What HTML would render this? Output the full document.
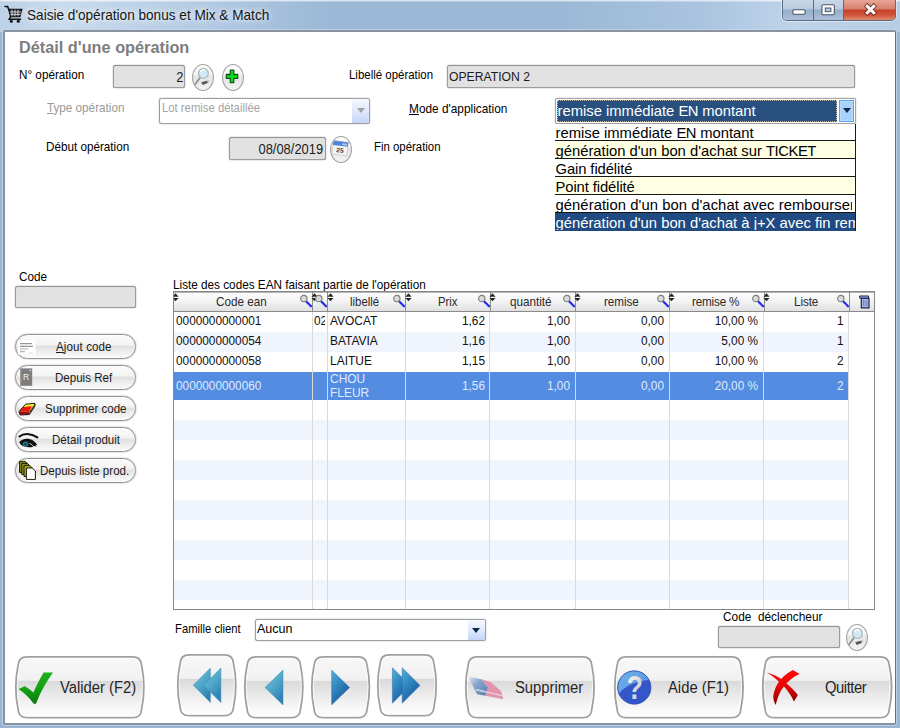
<!DOCTYPE html>
<html lang="fr">
<head>
<meta charset="utf-8">
<title>Saisie d'opération bonus et Mix &amp; Match</title>
<style>
*{box-sizing:border-box;margin:0;padding:0}
html,body{width:900px;height:728px;overflow:hidden}
body{position:relative;font-family:"Liberation Sans",sans-serif;background:#a9c3df;color:#000}
.abs,.lbl,.inp,.rbtn,.pill,.big,.cmb{position:absolute}
svg{display:block;overflow:visible}
#frame{position:absolute;left:0;top:0;width:900px;height:728px;
 background:linear-gradient(90deg,#bcd1e7 0,#c9dbed 60px,#b4cbe4 200px,#9bb8d6 330px,#9bb8d6 560px,#aac4df 700px,#bdd3ea 790px,#b6cde6 900px)}
#fl{position:absolute;left:0;top:32px;width:4px;height:696px;background:#9ab6d5}
#fr{position:absolute;left:895px;top:32px;width:5px;height:696px;background:#9ab6d5}
#fb{position:absolute;left:0;top:724px;width:900px;height:4px;background:#98b5d4}
#frametop{position:absolute;left:0;top:0;width:900px;height:2px;background:linear-gradient(180deg,rgba(255,255,255,.7) 0,rgba(255,255,255,.6) 45%,rgba(255,255,255,0) 100%)}
#title{position:absolute;left:27.4px;top:4px;height:22px;line-height:22px;font-size:14.5px;color:#161616;white-space:nowrap;transform:scaleX(.938);transform-origin:0 50%;
 text-shadow:0 0 6px rgba(255,255,255,.9),0 0 10px rgba(255,255,255,.7)}
#client{position:absolute;left:3px;top:30px;width:893px;height:695px;background:#fff;border:2px solid #8a94a1;border-right:1px solid #64717f;box-shadow:0 0 0 1px rgba(196,212,232,.85);border-radius:2px}
#ctl{position:absolute;left:782px;top:0;width:114px;height:21px;border:1px solid #5d6b7c;border-top:0;border-radius:0 0 5px 5px;overflow:hidden;
 box-shadow:0 0 0 1px rgba(255,255,255,.45)}
#ctl div{position:absolute;top:0;height:20px}
#cmin{left:0;width:31px;background:linear-gradient(180deg,#c9d8e8 0,#b9cbdf 45%,#97aec9 50%,#aac0d9 100%);border-right:1px solid #5d6b7c}
#cmax{left:31px;width:30px;background:linear-gradient(180deg,#c9d8e8 0,#b9cbdf 45%,#97aec9 50%,#aac0d9 100%);border-right:1px solid #5d6b7c}
#ccls{left:61px;width:51px;background:linear-gradient(180deg,#e7a596 0,#d8806f 45%,#c5432b 50%,#d1543a 75%,#e08a6c 100%)}
.lbl{font-size:13.4px;line-height:14px;white-space:nowrap;transform:scaleX(.8734);transform-origin:0 50%}
.sx{display:inline-block;transform:scaleX(.8734);transform-origin:0 50%}
.inp{background:#e1e1e1;border:1px solid #9c9c9c;border-top-color:#929292;border-radius:2.5px;font-size:13.5px;line-height:21px;white-space:nowrap;overflow:hidden;box-shadow:0 0 1.2px rgba(80,80,80,.75)}
u{text-decoration:underline;text-underline-offset:1px}
.rbtn{width:22px;height:27px;border-radius:50%;border:1.7px solid #a2a2a2;background:linear-gradient(180deg,#fdfdfd 0,#f6f6f6 40%,#e4e4e4 45%,#f3f3f3 100%);overflow:hidden}
.rbtn svg{position:absolute;left:-1.7px;top:-1.7px}
#dd{background:#fff;border-right:1px solid #1a1a1a;overflow:hidden}
#dd div{position:absolute;left:0;width:300px;height:18px;line-height:21px;font-size:14.8px;white-space:nowrap;overflow:hidden;border-bottom:1px solid #161616;padding-left:1px;color:#000;background:#fff}
#dd div i{display:block;font-style:normal;width:296px;overflow:hidden}
#dd div.y{background:#ffffe3}
#dd div.s{background:#1f4b82;color:#fff;border-bottom-color:#1f4b82}
.pill{left:15px;width:121px;height:25px;border:1px solid #939393;border-radius:12.5px;background:linear-gradient(180deg,#fbfbfb 0,#f3f3f3 44%,#dfdfdf 48%,#efefef 75%,#fbfbfb 100%);box-shadow:0 0 1.3px rgba(60,60,60,.7),inset 0 0 0 1px rgba(255,255,255,.6)}
.pill .t{position:absolute;top:0;line-height:23px;font-size:13.4px;white-space:nowrap;color:#1c1c1c;transform:scaleX(.862);transform-origin:0 50%}
.pill .ic{position:absolute}
#grid{background:#fff;border:1px solid #868686;overflow:hidden}
#rows .r{position:absolute;left:0;width:675px;height:20px;background:#fff}
#rows .r.b{background:#f0f4fc}
#rows .r.s{background:#548ce1}
#grid .v{position:absolute;top:20px;bottom:0;width:1px;background:#dadada}
#hdr{position:absolute;left:0;top:0;width:700px;height:19.6px;border-bottom:1.5px solid #8a8a8a;background:#fff}
#hdr .h{position:absolute;top:0;height:18.5px;background:linear-gradient(180deg,#fdfdfd 0,#f3f3f3 50%,#e0e0e0 100%);border-right:1px solid #8c8c8c;font-size:11.7px;line-height:19.3px;white-space:nowrap;color:#2a2a2a}
#hdr .h span{position:absolute;top:0;transform:scaleX(.8734);transform-origin:0 50%}
#hdr .h .so{position:absolute;left:-1.6px;top:.6px}
#hdr .h .hm{position:absolute;right:-.6px;top:.8px}
#hdr .h.last{border-right:0;background:linear-gradient(180deg,#fdfdfd 0,#f3f3f3 50%,#e0e0e0 100%)}
#grid .c{position:absolute;margin-top:-1.7px;font-size:13.4px;line-height:15px;white-space:nowrap;color:#111;transform:scaleX(.893);transform-origin:0 50%}
#grid .c.n{text-align:right;transform-origin:100% 50%}
#grid .c.w{color:#dfeaff}
.big{border:1.4px solid #9c9c9c;border-radius:9px/31px;background:linear-gradient(180deg,#f7f7f7 0,#f1f1f1 38%,#dbdbdb 40%,#e9e9e9 62%,#fafafa 88%,#fdfdfd 100%);box-shadow:inset 0 0 0 1px rgba(255,255,255,.85)}
.bigw{position:absolute}
.bigw svg{position:absolute;left:0;top:0}
.bigw .t{position:absolute;top:0;line-height:64.5px;font-size:15.8px;white-space:nowrap;color:#262626;transform:scaleX(.937);transform-origin:0 50%}
.k{letter-spacing:-.45px}
.nx{display:inline-block;font-size:15px;line-height:21px;color:#1c1c1c;transform:scaleX(.86)}
.nx.r{transform-origin:100% 50%}
.nx.l{transform-origin:0 50%}
#grid .c.d{transform:scaleX(.882)}
.cmb{background:#fff;border:1px solid #9e9e9e;border-radius:2.5px;font-size:11.4px;line-height:16px;padding:1px 0 0 3px;white-space:nowrap;overflow:hidden;box-shadow:0 0 1.2px rgba(90,90,90,.7)}
.cmb .arr{position:absolute;right:0;top:0;bottom:0;width:17px;background:linear-gradient(180deg,#f6f8ff 0,#e0e9fd 50%,#c4d4fa 100%)}
.cmb .arr:after{content:"";position:absolute;left:4.3px;top:7.8px;border-left:4.2px solid transparent;border-right:4.2px solid transparent;border-top:5px solid #10284c}
.cmb .arr.dis:after{border-top-color:#a2a2a2;left:5px;top:9.1px}
.cmb .arr.hot{right:.8px;top:1px;bottom:1px;width:15px;border:1px solid #5aa2f8;background:#a8d2fc;box-shadow:inset 0 0 0 1px #b9dcfd}
.cmb .arr.hot:after{left:2.6px;top:7.1px;border-top-color:#14284a}
.cmb.sel{padding:0;border-color:#a4a4a4;border-radius:2px}
.cmb.sel b{position:absolute;left:.5px;top:1px;right:18.3px;bottom:1px;background:#27507f;color:#fff;font-weight:normal;font-size:14.8px;line-height:21px;padding:1px 0 0 1px;outline:1px dotted #c9b8a0;outline-offset:-1px}
#grid:after{content:"";position:absolute;left:0;right:0;top:0;height:1px;background:rgba(110,110,110,.5)}

</style>
</head>
<body>
<svg width="0" height="0" style="position:absolute"><defs><linearGradient id="gbb" x1="0" y1="0" x2="0" y2="1"><stop offset="0" stop-color="#f8f8f8"/><stop offset=".385" stop-color="#f1f1f1"/><stop offset=".4" stop-color="#dadada"/><stop offset=".62" stop-color="#e9e9e9"/><stop offset=".88" stop-color="#fafafa"/><stop offset="1" stop-color="#fdfdfd"/></linearGradient></defs></svg>
<div id="frame"></div>
<div id="frametop"></div>
<div id="fl"></div><div id="fr"></div><div id="fb"></div>
<svg class="abs" style="left:4px;top:5px" width="20" height="19" viewBox="0 0 20 19"><g fill="none" stroke="#111" stroke-linecap="round"><path d="M1 1.6h2.6l1.3 3.2" stroke-width="1.5"/><path d="M4.6 4.4h13.2l-1.9 7.2H6.6z" fill="#2a2a2a" stroke-width="1.2"/><path d="M6.2 7h10.6M6.8 9.4h9.4M8 5v6M11 5v6M14 5v6" stroke="#d8dde4" stroke-width=".9"/><path d="M6.6 11.6l-1.4 2.6h11.4" stroke-width="1.5"/></g><circle cx="7.3" cy="16.3" r="1.5" fill="#111"/><circle cx="14.3" cy="16.3" r="1.5" fill="#111"/></svg>
<div id="title">Saisie d'opération bonus et Mix &amp; Match</div>
<div id="ctl"><div id="cmin"></div><div id="cmax"></div><div id="ccls"></div></div>
<svg class="abs" style="left:791.6px;top:9.2px" width="14" height="6" viewBox="0 0 14 6"><rect x=".9" y=".8" width="12.2" height="4.4" rx="1" fill="#fff" stroke="#4a5668" stroke-width="1.1"/></svg>
<svg class="abs" style="left:821.3px;top:3.8px" width="14" height="12" viewBox="0 0 14 12"><rect x=".9" y=".8" width="12.4" height="10" rx="1.2" fill="#fff" stroke="#4a5668" stroke-width="1.1"/><rect x="4.3" y="4" width="5.6" height="3.6" fill="#b9cbe0" stroke="#4a5668" stroke-width="1"/></svg>
<svg class="abs" style="left:862.6px;top:2.6px" width="15" height="13" viewBox="0 0 15 13"><g stroke-linecap="butt"><path d="M2.6 1.6l9.8 9.8M12.4 1.6l-9.8 9.8" stroke="#5a2016" stroke-width="5" opacity=".7"/><path d="M3.2 2.2l8.6 8.6M11.8 2.2l-8.6 8.6" stroke="#fff" stroke-width="3"/></g></svg>
<div id="client"></div>

<div class="abs" id="h1" style="left:19px;top:37.4px;font-size:16.3px;font-weight:bold;line-height:20px;color:#7d7d7d;white-space:nowrap">Détail d'une opération</div>

<div class="lbl" style="left:19px;top:68px;font-size:13.40px">N° opération</div>
<div class="inp" style="left:113px;top:65px;width:72px;height:23px;text-align:right;padding-right:1px"><span class="nx r">2</span></div>
<div class="rbtn" style="left:192px;top:63.5px"><svg width="22" height="27" viewBox="0 0 22 27"><path d="M9.2 14.6L4 21.4" stroke="#8a8a8a" stroke-width="1.6" stroke-linecap="round" fill="none"/><path d="M10.2 19.2l5.6-1.4 1.4 2-5.4 2.2z" fill="#555"/><path d="M15.2 17.6l2.6-.4.6 1.6-1.6.8z" fill="#b9b9b9"/><circle cx="12.4" cy="10.4" r="4.9" fill="#cfe9f5" stroke="#b3b7ba" stroke-width="1.3"/><path d="M9.6 8.6a3.4 3.4 0 0 1 4.6-1.2" stroke="#fff" stroke-width="1.3" fill="none" stroke-linecap="round"/></svg></div>
<div class="rbtn" style="left:222px;top:63.5px"><svg width="22" height="27" viewBox="0 0 22 27"><path transform="translate(1.1 .6) scale(.92 1)" d="M8.9 6.6h3.8v4.3h4.3v3.8h-4.3V19H8.9v-4.3H4.6v-3.8h4.3z" fill="#06e21c" stroke="#0a5410" stroke-width="1.3" stroke-linejoin="round"/></svg></div>
<div class="lbl" style="left:348.8px;top:68px;font-size:13.11px">Libellé opération</div>
<div class="inp" style="left:447px;top:65px;width:408px;height:23px;padding-left:1px"><span class="nx l" style="font-size:13.4px;transform:scaleX(.91)">OPERATION 2</span></div>

<div class="lbl" style="left:46.5px;top:101px;color:#9a9a9a;font-size:13.40px"><u>T</u>ype opération</div>
<div class="cmb" style="left:159px;top:98px;width:211px;height:26px;padding:0 0 0 1.5px"><span class="sx" style="color:#a5a5a5;font-size:12.94px;position:relative;top:1px">Lot remise détaillée</span><i class="arr dis"></i></div>
<div class="lbl" style="left:409px;top:101.6px;font-size:13.57px"><u>M</u>ode d'application</div>
<div class="cmb sel" style="left:555px;top:98px;width:301px;height:26px"><b>remise immédiate <span class="k">EN</span> montant</b><i class="arr hot"></i></div>
<div class="abs" id="dd" style="left:554.5px;top:124px;width:301.5px;height:106.5px">
<div style="top:-1px"><i>remise immédiate <span class="k">EN</span> montant</i></div>
<div class="y" style="top:17px"><i>génération d'un bon d'achat sur <span class="k">TICKET</span></i></div>
<div style="top:35px"><i style="letter-spacing:-.1px">Gain fidélité</i></div>
<div class="y" style="top:53px"><i style="letter-spacing:-.1px">Point fidélité</i></div>
<div style="top:71px"><i style="letter-spacing:.06px">génération d'un bon d'achat avec remboursement</i></div>
<div class="s" style="top:89px"><i style="width:300px">génération d'un bon d'achat à j+X avec fin remise</i></div>
</div>

<div class="lbl" style="left:46px;top:140px;font-size:13.40px">Début opération</div>
<div class="inp" style="left:229px;top:137px;width:97px;height:23px;text-align:right;padding-right:1.5px"><span class="nx r">08/08/2019</span></div>
<div class="rbtn" style="left:330px;top:135.5px"><svg width="22" height="27" viewBox="0 0 22 27"><g transform="rotate(7 11 13)"><rect x="3.6" y="6.4" width="15" height="13.6" fill="#f4f4f4" stroke="#c9c9c9" stroke-width=".8"/><rect x="3.6" y="6.4" width="15" height="4.4" fill="#4f84dc"/><rect x="12.6" y="8" width="5" height="1.8" fill="#a9c5f2"/><text x="11.2" y="17.4" font-family="Liberation Sans, sans-serif" font-size="6.6" font-weight="bold" text-anchor="middle" fill="#3a3a3a">25</text></g></svg></div>
<div class="lbl" style="left:374px;top:140px;font-size:13.05px">Fin opération</div>

<div class="lbl" style="left:19.3px;top:270px;font-size:13.40px">Code</div>
<div class="inp" style="left:14.6px;top:286px;width:121.8px;height:22px"></div>
<div class="lbl" style="left:173px;top:277.7px;font-size:13.45px">Liste des codes EAN faisant partie de l'opération</div>

<div class="pill" style="top:334px"><span class="ic" style="left:1px;top:3px"><svg class="ic" width="20" height="18" viewBox="0 0 20 18"><rect x="1" y="2" width="17.5" height="14.6" fill="#fff"/><path d="M1.2 1.6c1-1 2.2-.6 2.6.4" stroke="#c9c9c9" fill="none"/><path d="M3 5.6h12M3 8.3h13" stroke="#969696" stroke-width="1.3"/><path d="M3 11h8M3 13.6h5" stroke="#b0b0b0" stroke-width="1.2"/><path d="M11.5 15h5" stroke="#dadada" stroke-width="1"/></svg></span><span class="t" style="left:39.6px;letter-spacing:.12px"><u>A</u>jout code</span></div>
<div class="pill" style="top:365px"><span class="ic" style="left:-1px;top:1px"><svg class="ic" width="20" height="20" viewBox="0 0 20 20"><rect x="5" y="1.4" width="12.2" height="17.4" fill="#7c7c7c"/><rect x="5" y="1.4" width="1.4" height="17.4" fill="#9a9a9a"/><circle cx="15.3" cy="3.4" r=".9" fill="#c8c8c8"/><text x="11.1" y="13.4" font-family="Liberation Sans, sans-serif" font-size="8.6" text-anchor="middle" fill="#f3f3f3">R</text></svg></span><span class="t" style="left:39.1px">Depuis Ref</span></div>
<div class="pill" style="top:396px"><span class="ic" style="left:1.3px;top:4px"><svg class="ic" width="20" height="16" viewBox="0 0 20 16"><path d="M2 10.6L8.6 3.2l9.4-.9-5.6 8.1z" fill="#f4f21e"/><path d="M2 10.6l4.2-4.7 8.6-.6-2.4 5.1z" fill="#ee1414"/><path d="M2 10.6l10.4-.2v3.1L3.2 14z" fill="#9c0c0c"/><path d="M12.4 10.4L18 2.3v2.6l-5.6 8.6z" fill="#5a5a10"/><path d="M2 10.6L8.6 3.2l9.4-.9v2.6l-5.6 8.6L3.2 14z" fill="none" stroke="#1a1a1a" stroke-width="1" stroke-linejoin="round"/></svg></span><span class="t" style="left:28.6px">Supprimer code</span></div>
<div class="pill" style="top:427px"><span class="ic" style="left:2px;top:4px"><svg class="ic" width="22" height="18" viewBox="0 0 22 18"><path d="M1.4 4.6C5.6 1 12.6.8 19.4 5.4" fill="none" stroke="#111" stroke-width="2" stroke-linecap="round"/><path d="M1.2 10.2C4 6.4 10 5.6 14.6 8.2c2 1.1 3.4 2.6 4.2 4.2-3 3.2-8.4 3.6-12.4 2.2C4 13.8 2.2 12.2 1.2 10.2z" fill="#0e0e0e"/><circle cx="7.6" cy="12.1" r="2.7" fill="#1c8a92"/><circle cx="7.6" cy="12.1" r="1.2" fill="#05282b"/><path d="M12 9.4c2 .8 4.4 2.6 6 5.2M13.6 8.6c2.2 1 4 2.6 5.2 4.6" stroke="#222" stroke-width=".9" fill="none"/><path d="M11.5 11.5c1.5.5 3 1.7 4.2 3.4" stroke="#f0f0f0" stroke-width="1" fill="none"/></svg></span><span class="t" style="left:35.6px">Détail produit</span></div>
<div class="pill" style="top:458px"><span class="ic" style="left:2px;top:1px"><svg class="ic" width="20" height="21" viewBox="0 0 20 21"><g stroke="#1c1c08" stroke-width="1" stroke-linejoin="round"><path d="M1.6 1.4h5.6l2.4 2.4v8.6H1.6z" fill="#8c8a14"/><path d="M3.8 3.4h5.6l2.4 2.4v8.6H3.8z" fill="#9a981c"/><path d="M6 5.4h5.6l2.4 2.4v8.6H6z" fill="#a8a624"/><path d="M8.4 8h5.8l3.2 3v8.4H8.4z" fill="#fff"/></g></svg></span><span class="t" style="left:23.6px">Depuis liste prod.</span></div>

<div class="abs" id="grid" style="left:173px;top:291px;width:702px;height:319px">
 <div id="rows">
  <div class="r" style="top:20px"></div>
  <div class="r b" style="top:39.5px"></div>
  <div class="r" style="top:60px"></div>
  <div class="r s" style="top:79.5px;height:28.5px"></div>
  <div class="r b" style="top:128px"></div>
  <div class="r b" style="top:168px"></div>
  <div class="r b" style="top:208px"></div>
  <div class="r b" style="top:248px"></div>
  <div class="r b" style="top:288px"></div>
 </div>
 <div class="v" style="left:137.5px"></div><div class="v" style="left:152.8px"></div><div class="v" style="left:230.6px"></div>
 <div class="v" style="left:315.1px"></div><div class="v" style="left:400.5px"></div><div class="v" style="left:494.5px"></div>
 <div class="v" style="left:589px"></div><div class="v" style="left:674px"></div>
 <div id="hdr">
  <div class="h" style="left:0;width:139px"><svg class="so" width="7" height="9" viewBox="0 0 7 9"><path d="M.4 3.7L3.5 .3l3.1 3.4zM.4 4.9h6.2L3.5 8.3z" fill="#262626"/></svg><span style="left:42px;font-size:13.40px">Code ean</span><svg class="hm" width="14" height="16" viewBox="0 0 14 16"><path d="M7 8.2l5 5" stroke="#1a1af0" stroke-width="2.2" stroke-linecap="round"/><path d="M7.8 9.6l3.8 3.8" stroke="#9a9aff" stroke-width=".7" stroke-dasharray="1 1"/><circle cx="4.8" cy="5.6" r="3.2" fill="#d9d9d9" stroke="#7d7d7d" stroke-width="1.1"/></svg></div>
  <div class="h" style="left:139px;width:15.3px"><svg class="so" width="7" height="9" viewBox="0 0 7 9"><path d="M.4 3.7L3.5 .3l3.1 3.4zM.4 4.9h6.2L3.5 8.3z" fill="#262626"/></svg><svg class="hm" width="14" height="16" viewBox="0 0 14 16"><path d="M7 8.2l5 5" stroke="#1a1af0" stroke-width="2.2" stroke-linecap="round"/><path d="M7.8 9.6l3.8 3.8" stroke="#9a9aff" stroke-width=".7" stroke-dasharray="1 1"/><circle cx="4.8" cy="5.6" r="3.2" fill="#d9d9d9" stroke="#7d7d7d" stroke-width="1.1"/></svg></div>
  <div class="h" style="left:154.3px;width:77.8px"><svg class="so" width="7" height="9" viewBox="0 0 7 9"><path d="M.4 3.7L3.5 .3l3.1 3.4zM.4 4.9h6.2L3.5 8.3z" fill="#262626"/></svg><span style="left:21.5px;font-size:13.05px">libellé</span><svg class="hm" width="14" height="16" viewBox="0 0 14 16"><path d="M7 8.2l5 5" stroke="#1a1af0" stroke-width="2.2" stroke-linecap="round"/><path d="M7.8 9.6l3.8 3.8" stroke="#9a9aff" stroke-width=".7" stroke-dasharray="1 1"/><circle cx="4.8" cy="5.6" r="3.2" fill="#d9d9d9" stroke="#7d7d7d" stroke-width="1.1"/></svg></div>
  <div class="h" style="left:232.1px;width:84.9px"><svg class="so" width="7" height="9" viewBox="0 0 7 9"><path d="M.4 3.7L3.5 .3l3.1 3.4zM.4 4.9h6.2L3.5 8.3z" fill="#262626"/></svg><span style="left:31.5px;font-size:12.94px">Prix</span><svg class="hm" width="14" height="16" viewBox="0 0 14 16"><path d="M7 8.2l5 5" stroke="#1a1af0" stroke-width="2.2" stroke-linecap="round"/><path d="M7.8 9.6l3.8 3.8" stroke="#9a9aff" stroke-width=".7" stroke-dasharray="1 1"/><circle cx="4.8" cy="5.6" r="3.2" fill="#d9d9d9" stroke="#7d7d7d" stroke-width="1.1"/></svg></div>
  <div class="h" style="left:317px;width:85px"><svg class="so" width="7" height="9" viewBox="0 0 7 9"><path d="M.4 3.7L3.5 .3l3.1 3.4zM.4 4.9h6.2L3.5 8.3z" fill="#262626"/></svg><span style="left:19px;font-size:13.40px">quantité</span><svg class="hm" width="14" height="16" viewBox="0 0 14 16"><path d="M7 8.2l5 5" stroke="#1a1af0" stroke-width="2.2" stroke-linecap="round"/><path d="M7.8 9.6l3.8 3.8" stroke="#9a9aff" stroke-width=".7" stroke-dasharray="1 1"/><circle cx="4.8" cy="5.6" r="3.2" fill="#d9d9d9" stroke="#7d7d7d" stroke-width="1.1"/></svg></div>
  <div class="h" style="left:402px;width:94px"><svg class="so" width="7" height="9" viewBox="0 0 7 9"><path d="M.4 3.7L3.5 .3l3.1 3.4zM.4 4.9h6.2L3.5 8.3z" fill="#262626"/></svg><span style="left:27.5px;letter-spacing:-.1px;font-size:13.40px">remise</span><svg class="hm" width="14" height="16" viewBox="0 0 14 16"><path d="M7 8.2l5 5" stroke="#1a1af0" stroke-width="2.2" stroke-linecap="round"/><path d="M7.8 9.6l3.8 3.8" stroke="#9a9aff" stroke-width=".7" stroke-dasharray="1 1"/><circle cx="4.8" cy="5.6" r="3.2" fill="#d9d9d9" stroke="#7d7d7d" stroke-width="1.1"/></svg></div>
  <div class="h" style="left:496px;width:95px"><svg class="so" width="7" height="9" viewBox="0 0 7 9"><path d="M.4 3.7L3.5 .3l3.1 3.4zM.4 4.9h6.2L3.5 8.3z" fill="#262626"/></svg><span style="left:22px;letter-spacing:-.2px;font-size:13.40px">remise %</span><svg class="hm" width="14" height="16" viewBox="0 0 14 16"><path d="M7 8.2l5 5" stroke="#1a1af0" stroke-width="2.2" stroke-linecap="round"/><path d="M7.8 9.6l3.8 3.8" stroke="#9a9aff" stroke-width=".7" stroke-dasharray="1 1"/><circle cx="4.8" cy="5.6" r="3.2" fill="#d9d9d9" stroke="#7d7d7d" stroke-width="1.1"/></svg></div>
  <div class="h" style="left:591px;width:85px"><svg class="so" width="7" height="9" viewBox="0 0 7 9"><path d="M.4 3.7L3.5 .3l3.1 3.4zM.4 4.9h6.2L3.5 8.3z" fill="#262626"/></svg><span style="left:28.5px;letter-spacing:-.1px;font-size:13.40px">Liste</span><svg class="hm" width="14" height="16" viewBox="0 0 14 16"><path d="M7 8.2l5 5" stroke="#1a1af0" stroke-width="2.2" stroke-linecap="round"/><path d="M7.8 9.6l3.8 3.8" stroke="#9a9aff" stroke-width=".7" stroke-dasharray="1 1"/><circle cx="4.8" cy="5.6" r="3.2" fill="#d9d9d9" stroke="#7d7d7d" stroke-width="1.1"/></svg></div>
  <div class="h last" style="left:676px;width:25px"></div>
  <svg class="abs" style="left:684px;top:1.6px" width="13" height="16" viewBox="0 0 14 17"><path d="M3.6 4.6h8.2v10.2H3.6z" fill="#b0bdee" stroke="#1c2440" stroke-width="1.3"/><path d="M1.8 2h9.6v2.4H1.8z" fill="#8c9fe2" stroke="#1c2440" stroke-width="1"/><path d="M5.9 6.4v6.6M7.7 6.4v6.6M9.5 6.4v6.6" stroke="#5a6cc0" stroke-width=".8"/></svg>
 </div>
 <div class="c d" style="left:1.5px;top:23px">0000000000001</div>
 <div class="c d" style="left:1.5px;top:43px">0000000000054</div>
 <div class="c d" style="left:1.5px;top:63px">0000000000058</div>
 <div class="c d w" style="left:1.5px;top:88px">0000000000060</div>
 <div class="c d" style="left:140px;top:23px;width:15px;clip-path:inset(0 2.5px 0 0)">02</div>
 <div class="c" style="left:155.8px;top:23px">AVOCAT</div>
 <div class="c" style="left:155.8px;top:43px">BATAVIA</div>
 <div class="c" style="left:155.8px;top:63px">LAITUE</div>
 <div class="c w" style="left:155.8px;top:80px;margin-top:0;line-height:14px">CHOU<br>FLEUR</div>
 <div class="c d n" style="left:233px;width:78px;top:23px">1,62</div>
 <div class="c d n" style="left:233px;width:78px;top:43px">1,16</div>
 <div class="c d n" style="left:233px;width:78px;top:63px">1,15</div>
 <div class="c d n w" style="left:233px;width:78px;top:88px">1,56</div>
 <div class="c d n" style="left:317px;width:79px;top:23px">1,00</div>
 <div class="c d n" style="left:317px;width:79px;top:43px">1,00</div>
 <div class="c d n" style="left:317px;width:79px;top:63px">1,00</div>
 <div class="c d n w" style="left:317px;width:79px;top:88px">1,00</div>
 <div class="c d n" style="left:402px;width:88px;top:23px">0,00</div>
 <div class="c d n" style="left:402px;width:88px;top:43px">0,00</div>
 <div class="c d n" style="left:402px;width:88px;top:63px">0,00</div>
 <div class="c d n w" style="left:402px;width:88px;top:88px">0,00</div>
 <div class="c d n" style="left:496px;width:88px;top:23px">10,00 %</div>
 <div class="c d n" style="left:496px;width:88px;top:43px">5,00 %</div>
 <div class="c d n" style="left:496px;width:88px;top:63px">10,00 %</div>
 <div class="c d n w" style="left:496px;width:88px;top:88px">20,00 %</div>
 <div class="c d n" style="left:591px;width:78.5px;top:23px">1</div>
 <div class="c d n" style="left:591px;width:78.5px;top:43px">1</div>
 <div class="c d n" style="left:591px;width:78.5px;top:63px">2</div>
 <div class="c d n w" style="left:591px;width:78.5px;top:88px">2</div>
</div>

<div class="lbl" style="left:175px;top:622px;font-size:12.9px">Famille client</div>
<div class="cmb" style="left:255px;top:619px;width:231px;height:22px"><span class="sx" style="font-size:13.6px;position:relative;top:0;left:-2.2px;transform:scaleX(.92)">Aucun</span><i class="arr"></i></div>
<div class="lbl" style="left:722.5px;top:609.5px;font-size:13.57px">Code&nbsp; déclencheur</div>
<div class="inp" style="left:717.6px;top:626px;width:122px;height:22px"></div>
<div class="rbtn" style="left:846px;top:623.5px"><svg width="22" height="27" viewBox="0 0 22 27"><path d="M9.2 14.6L4 21.4" stroke="#8a8a8a" stroke-width="1.6" stroke-linecap="round" fill="none"/><path d="M10.2 19.2l5.6-1.4 1.4 2-5.4 2.2z" fill="#555"/><path d="M15.2 17.6l2.6-.4.6 1.6-1.6.8z" fill="#b9b9b9"/><circle cx="12.4" cy="10.4" r="4.9" fill="#cfe9f5" stroke="#b3b7ba" stroke-width="1.3"/><path d="M9.6 8.6a3.4 3.4 0 0 1 4.6-1.2" stroke="#fff" stroke-width="1.3" fill="none" stroke-linecap="round"/></svg></div>

<div class="bigw" style="left:14.8px;top:656px;width:129.7px;height:62.6px"><svg width="129.7" height="62.6" viewBox="0 0 129.7 62.6"><path d="M12.10 0.90H117.60Q126.10 0.90 126.60 9.40Q131.23 31.30 126.60 53.20Q126.10 61.70 117.60 61.70H12.10Q3.60 61.70 3.10 53.20Q-1.53 31.30 3.10 9.40Q3.60 0.90 12.10 0.90Z" fill="url(#gbb)" stroke="#a0a0a0" stroke-width="1.8"/><path d="M12.10 0.90H117.60Q126.10 0.90 126.60 9.40Q131.23 31.30 126.60 53.20Q126.10 61.70 117.60 61.70H12.10Q3.60 61.70 3.10 53.20Q-1.53 31.30 3.10 9.40Q3.60 0.90 12.10 0.90Z" fill="none" stroke="#fff" stroke-opacity=".7" stroke-width="1" transform="translate(64.85 31.30) scale(0.9753 0.9489) translate(-64.85 -31.30)"/></svg><span class="t" style="left:45.5px">Valider (F2)</span></div>
<div class="bigw" style="left:177.4px;top:654px;width:59.6px;height:62.6px"><svg width="59.6" height="62.6" viewBox="0 0 59.6 62.6"><path d="M12.10 0.90H47.50Q56.00 0.90 56.50 9.40Q61.13 31.30 56.50 53.20Q56.00 61.70 47.50 61.70H12.10Q3.60 61.70 3.10 53.20Q-1.53 31.30 3.10 9.40Q3.60 0.90 12.10 0.90Z" fill="url(#gbb)" stroke="#a0a0a0" stroke-width="1.8"/><path d="M12.10 0.90H47.50Q56.00 0.90 56.50 9.40Q61.13 31.30 56.50 53.20Q56.00 61.70 47.50 61.70H12.10Q3.60 61.70 3.10 53.20Q-1.53 31.30 3.10 9.40Q3.60 0.90 12.10 0.90Z" fill="none" stroke="#fff" stroke-opacity=".7" stroke-width="1" transform="translate(29.80 31.30) scale(0.9463 0.9489) translate(-29.80 -31.30)"/></svg></div>
<div class="bigw" style="left:243.9px;top:656px;width:59.6px;height:62.6px"><svg width="59.6" height="62.6" viewBox="0 0 59.6 62.6"><path d="M12.10 0.90H47.50Q56.00 0.90 56.50 9.40Q61.13 31.30 56.50 53.20Q56.00 61.70 47.50 61.70H12.10Q3.60 61.70 3.10 53.20Q-1.53 31.30 3.10 9.40Q3.60 0.90 12.10 0.90Z" fill="url(#gbb)" stroke="#a0a0a0" stroke-width="1.8"/><path d="M12.10 0.90H47.50Q56.00 0.90 56.50 9.40Q61.13 31.30 56.50 53.20Q56.00 61.70 47.50 61.70H12.10Q3.60 61.70 3.10 53.20Q-1.53 31.30 3.10 9.40Q3.60 0.90 12.10 0.90Z" fill="none" stroke="#fff" stroke-opacity=".7" stroke-width="1" transform="translate(29.80 31.30) scale(0.9463 0.9489) translate(-29.80 -31.30)"/></svg></div>
<div class="bigw" style="left:310.5px;top:656px;width:59.2px;height:62.6px"><svg width="59.2" height="62.6" viewBox="0 0 59.2 62.6"><path d="M12.10 0.90H47.10Q55.60 0.90 56.10 9.40Q60.73 31.30 56.10 53.20Q55.60 61.70 47.10 61.70H12.10Q3.60 61.70 3.10 53.20Q-1.53 31.30 3.10 9.40Q3.60 0.90 12.10 0.90Z" fill="url(#gbb)" stroke="#a0a0a0" stroke-width="1.8"/><path d="M12.10 0.90H47.10Q55.60 0.90 56.10 9.40Q60.73 31.30 56.10 53.20Q55.60 61.70 47.10 61.70H12.10Q3.60 61.70 3.10 53.20Q-1.53 31.30 3.10 9.40Q3.60 0.90 12.10 0.90Z" fill="none" stroke="#fff" stroke-opacity=".7" stroke-width="1" transform="translate(29.60 31.30) scale(0.9459 0.9489) translate(-29.60 -31.30)"/></svg></div>
<div class="bigw" style="left:377px;top:654px;width:60px;height:62.6px"><svg width="60" height="62.6" viewBox="0 0 60 62.6"><path d="M12.10 0.90H47.90Q56.40 0.90 56.90 9.40Q61.53 31.30 56.90 53.20Q56.40 61.70 47.90 61.70H12.10Q3.60 61.70 3.10 53.20Q-1.53 31.30 3.10 9.40Q3.60 0.90 12.10 0.90Z" fill="url(#gbb)" stroke="#a0a0a0" stroke-width="1.8"/><path d="M12.10 0.90H47.90Q56.40 0.90 56.90 9.40Q61.53 31.30 56.90 53.20Q56.40 61.70 47.90 61.70H12.10Q3.60 61.70 3.10 53.20Q-1.53 31.30 3.10 9.40Q3.60 0.90 12.10 0.90Z" fill="none" stroke="#fff" stroke-opacity=".7" stroke-width="1" transform="translate(30.00 31.30) scale(0.9467 0.9489) translate(-30.00 -31.30)"/></svg></div>
<div class="bigw" style="left:465.2px;top:656px;width:129.9px;height:62.6px"><svg width="129.9" height="62.6" viewBox="0 0 129.9 62.6"><path d="M12.10 0.90H117.80Q126.30 0.90 126.80 9.40Q131.43 31.30 126.80 53.20Q126.30 61.70 117.80 61.70H12.10Q3.60 61.70 3.10 53.20Q-1.53 31.30 3.10 9.40Q3.60 0.90 12.10 0.90Z" fill="url(#gbb)" stroke="#a0a0a0" stroke-width="1.8"/><path d="M12.10 0.90H117.80Q126.30 0.90 126.80 9.40Q131.43 31.30 126.80 53.20Q126.30 61.70 117.80 61.70H12.10Q3.60 61.70 3.10 53.20Q-1.53 31.30 3.10 9.40Q3.60 0.90 12.10 0.90Z" fill="none" stroke="#fff" stroke-opacity=".7" stroke-width="1" transform="translate(64.95 31.30) scale(0.9754 0.9489) translate(-64.95 -31.30)"/></svg><span class="t" style="left:49.7px">Supprimer</span></div>
<div class="bigw" style="left:613.8px;top:656px;width:129.9px;height:62.6px"><svg width="129.9" height="62.6" viewBox="0 0 129.9 62.6"><path d="M12.10 0.90H117.80Q126.30 0.90 126.80 9.40Q131.43 31.30 126.80 53.20Q126.30 61.70 117.80 61.70H12.10Q3.60 61.70 3.10 53.20Q-1.53 31.30 3.10 9.40Q3.60 0.90 12.10 0.90Z" fill="url(#gbb)" stroke="#a0a0a0" stroke-width="1.8"/><path d="M12.10 0.90H117.80Q126.30 0.90 126.80 9.40Q131.43 31.30 126.80 53.20Q126.30 61.70 117.80 61.70H12.10Q3.60 61.70 3.10 53.20Q-1.53 31.30 3.10 9.40Q3.60 0.90 12.10 0.90Z" fill="none" stroke="#fff" stroke-opacity=".7" stroke-width="1" transform="translate(64.95 31.30) scale(0.9754 0.9489) translate(-64.95 -31.30)"/></svg><span class="t" style="left:53.8px">Aide (F1)</span></div>
<div class="bigw" style="left:762.3px;top:656px;width:130.4px;height:62.6px"><svg width="130.4" height="62.6" viewBox="0 0 130.4 62.6"><path d="M12.10 0.90H118.30Q126.80 0.90 127.30 9.40Q131.93 31.30 127.30 53.20Q126.80 61.70 118.30 61.70H12.10Q3.60 61.70 3.10 53.20Q-1.53 31.30 3.10 9.40Q3.60 0.90 12.10 0.90Z" fill="url(#gbb)" stroke="#a0a0a0" stroke-width="1.8"/><path d="M12.10 0.90H118.30Q126.80 0.90 127.30 9.40Q131.93 31.30 127.30 53.20Q126.80 61.70 118.30 61.70H12.10Q3.60 61.70 3.10 53.20Q-1.53 31.30 3.10 9.40Q3.60 0.90 12.10 0.90Z" fill="none" stroke="#fff" stroke-opacity=".7" stroke-width="1" transform="translate(65.20 31.30) scale(0.9755 0.9489) translate(-65.20 -31.30)"/></svg><span class="t" style="left:63px;letter-spacing:-.48px">Quitter</span></div>
<svg class="abs" style="left:0;top:650px" width="900" height="78" viewBox="0 650 900 78">
<defs>
<linearGradient id="gck" x1="0" y1="0" x2="0" y2="1"><stop offset="0" stop-color="#1eb01e"/><stop offset=".55" stop-color="#12a012"/><stop offset="1" stop-color="#0a7a0a"/></linearGradient>
<linearGradient id="gaL" x1="0" y1="0" x2=".6" y2="1"><stop offset="0" stop-color="#64bad6"/><stop offset=".5" stop-color="#54accc"/><stop offset="1" stop-color="#2f80b4"/></linearGradient>
<linearGradient id="gaR" x1="0" y1="0" x2=".6" y2="1"><stop offset="0" stop-color="#52b0d6"/><stop offset=".5" stop-color="#2e84be"/><stop offset="1" stop-color="#1c569c"/></linearGradient>
<linearGradient id="geb" x1="0" y1="0" x2="1" y2="1"><stop offset="0" stop-color="#e3ecf6"/><stop offset=".4" stop-color="#86a6cc"/><stop offset="1" stop-color="#4f7fb2"/></linearGradient>
<linearGradient id="grx" x1="0" y1="0" x2="0" y2="1"><stop offset="0" stop-color="#ff0a0a"/><stop offset=".45" stop-color="#ea0404"/><stop offset="1" stop-color="#8c0000"/></linearGradient>
<linearGradient id="ghl" x1="0" y1="0" x2="1" y2="1"><stop offset="0" stop-color="#7ab8ee"/><stop offset="1" stop-color="#4e8cdc"/></linearGradient><linearGradient id="gqm" x1="0" y1="0" x2="1" y2="1"><stop offset="0" stop-color="#fff"/><stop offset=".6" stop-color="#d4d6da"/><stop offset="1" stop-color="#f2f2f2"/></linearGradient><clipPath id="chp"><circle cx="634.3" cy="687.5" r="16.6"/></clipPath>
</defs>
<path d="M18.6 688.9l6.2-2.6c3.4 1.8 6 3.8 8.6 6.2 2.8-6.6 6.4-13.4 10.2-20h9.4c-6.8 9.4-12.6 19.8-17 31.2h-2.4c-4-6-9-10.8-15-14.8z" fill="url(#gck)"/>
<g stroke="#3a8cb4" stroke-width=".5" stroke-linejoin="round">
<path d="M210.4 668L193.3 685.2l17.1 17.3z" fill="url(#gaL)"/>
<path d="M220.9 668l-17.3 17.2 17.3 17.3z" fill="url(#gaL)"/>
<path d="M283 670L265 687.5 283 705z" fill="url(#gaL)"/>
</g>
<g stroke="#2a6ca8" stroke-width=".5" stroke-linejoin="round">
<path d="M331.7 670.2l17.9 17.3-17.9 17.3z" fill="url(#gaR)"/>
<path d="M392.4 667.75L410 685.4l-17.6 17.8z" fill="url(#gaR)"/>
<path d="M402.2 667.75L420 685.4l-17.8 17.8z" fill="url(#gaR)"/>
</g>
<path d="M468.2 676.4l13.2 2.9 6.8 8.2-2.8 8.2-8.3-1.4z" fill="url(#geb)"/>
<path d="M481.4 679.3l9.3 2.8 10.7 9.3 1.8 7.9-17.8-3.6 2.8-8.2z" fill="#e294aa"/>
<path d="M476 689.6l9.8 2.2 17 4" stroke="#f1ccd6" stroke-width="1.2" fill="none"/>
<path d="M476 689.6l9.8 2.2" stroke="#c4d6ea" stroke-width="1.2" fill="none"/>
<circle cx="634.3" cy="687.5" r="16.7" fill="#3456c8"/>
<g clip-path="url(#chp)"><path d="M614 700.5c4-7.5 10-13 18-16.5 6-2.6 12-4 20-4.4l2-16h-42z" fill="url(#ghl)"/><path d="M620 703c8 7 24 7 31-7" stroke="#4672de" stroke-width="5" fill="none" opacity=".5"/></g>
<circle cx="634.3" cy="687.5" r="16.6" fill="none" stroke="#3358b8" stroke-width=".9"/>
<text transform="translate(634.8 699.3) scale(.8 1)" font-family="Liberation Sans, sans-serif" font-size="33" font-weight="bold" text-anchor="middle" fill="url(#gqm)">?</text>
<path d="M766.8 672.5c6.4 1.6 12 4.4 16.8 8.4 6.4 5.2 11 9.6 14.3 14.1l-4 6.4c-2.6-5.8-6.4-11.4-11.4-16.4-4.4-4.6-9.6-8.8-15.7-12.5z" fill="url(#grx)"/>
<path d="M792.9 670l6.7 3.9c-8.6 4-14.8 10-18.8 17-2.2 4-3.8 8.6-5.1 14.1-1.6-3-2.4-5.8-2.5-8.6 1-6.4 3.4-12 7.4-16.8 3.4-4 7.4-7.2 12.3-9.6z" fill="url(#grx)"/>
</svg>

</body>
</html>
